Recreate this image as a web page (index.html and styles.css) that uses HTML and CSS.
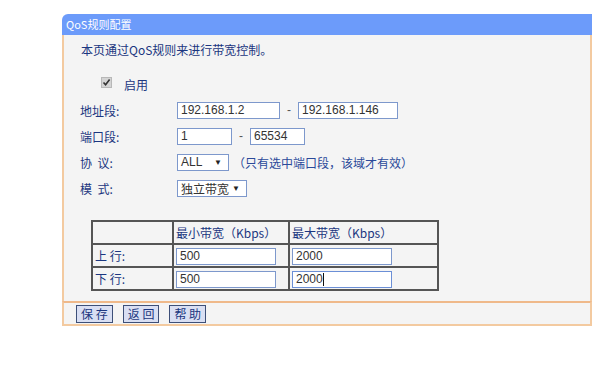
FILE: index.html
```html
<!DOCTYPE html>
<html lang="zh">
<head>
<meta charset="utf-8">
<title>QoS规则配置</title>
<link rel="stylesheet" href="styles.css">
</head>
<body>
<div class="panel">
  <div class="head">QoS规则配置</div>
  <div class="body">
    <div class="intro">本页通过QoS规则来进行带宽控制。</div>
    <div class="check-row">
      <span class="cbox"><svg width="9" height="9" viewBox="0 0 9 9"><path d="M1.5 4.5 L3.6 6.8 L7.6 1.6" fill="none" stroke="#333" stroke-width="1.6"/></svg></span>
      <span class="check-label">启用</span>
    </div>
    <div class="row">
      <span class="label">地址段:</span>
      <span class="field w103">192.168.1.2</span>
      <span class="dash">-</span>
      <span class="field w100">192.168.1.146</span>
    </div>
    <div class="row">
      <span class="label">端口段:</span>
      <span class="field w55">1</span>
      <span class="dash">-</span>
      <span class="field w55">65534</span>
    </div>
    <div class="row">
      <span class="label">协&nbsp;&nbsp;议:</span>
      <span class="select w52"><span>ALL</span><span class="arrow">▼</span></span>
      <span class="note">（只有选中端口段，该域才有效）</span>
    </div>
    <div class="row">
      <span class="label">模&nbsp;&nbsp;式:</span>
      <span class="select w70"><span>独立带宽</span><span class="arrow">▼</span></span>
    </div>
    <table class="bw">
      <tr>
        <td class="c1"></td>
        <td class="c2">最小带宽（Kbps）</td>
        <td class="c3">最大带宽（Kbps）</td>
      </tr>
      <tr>
        <td class="c1">上&nbsp;行:</td>
        <td class="c2"><span class="field w100">500</span></td>
        <td class="c3"><span class="field w100">2000</span></td>
      </tr>
      <tr>
        <td class="c1">下&nbsp;行:</td>
        <td class="c2"><span class="field w100">500</span></td>
        <td class="c3"><span class="field w100 active">2000<span class="caret"></span></span></td>
      </tr>
    </table>
  </div>
  <div class="foot">
    <span class="btn">保&nbsp;存</span>
    <span class="btn">返&nbsp;回</span>
    <span class="btn">帮&nbsp;助</span>
  </div>
</div>
</body>
</html>
```

FILE: styles.css
```css
html, body {
  margin: 0;
  padding: 0;
  background: #ffffff;
}
body {
  font-family: "Noto Sans CJK SC", "Liberation Sans", sans-serif;
  font-size: 12px;
  color: #1b3680;
}
.panel {
  margin: 14px 0 0 62px;
  width: 530px;
}
.head {
  height: 21px;
  line-height: 21px;
  background: #6c9bfa;
  color: #ffffff;
  padding-left: 4px;
  border-radius: 6px 0 0 0;
  font-size: 11px;
}
.body {
  background: #f4f4f4;
  border-left: 2px solid #f3caa0;
  border-right: 2px solid #f3caa0;
  padding: 7px 0 10px 16px;
}
.intro {
  height: 16px;
  line-height: 16px;
  padding-left: 1px;
}
.check-row {
  margin-top: 17px;
  height: 18px;
  display: flex;
  align-items: center;
  padding-left: 21px;
}
.cbox {
  width: 9px;
  height: 9px;
  background: #d4d4d4;
  border: 1px solid #b8b8b8;
  display: inline-flex;
  align-items: center;
  justify-content: center;
  margin-top: -4px;
}
.check-label {
  margin-left: 12px;
}
.row {
  height: 26px;
  display: flex;
  align-items: center;
}
.check-row + .row {
  margin-top: 4px;
}
.label {
  width: 97px;
  flex: none;
}
.field {
  display: inline-block;
  box-sizing: border-box;
  height: 17px;
  line-height: 15px;
  border: 1px solid #7d98cc;
  background: #ffffff;
  color: #333333;
  font-family: "Liberation Sans", sans-serif;
  font-size: 12px;
  padding-left: 3px;
  white-space: nowrap;
}
.w103 { width: 103px; }
.w100 { width: 100px; }
.w55 { width: 55px; }
.w52 { width: 52px; }
.w70 { width: 70px; }
.dash {
  color: #555;
  font-family: "Liberation Sans", sans-serif;
  width: 18px;
  text-align: center;
}
.select {
  display: inline-flex;
  align-items: center;
  justify-content: space-between;
  box-sizing: border-box;
  height: 17px;
  border: 1px solid #7d98cc;
  background: #ffffff;
  color: #333333;
  font-family: "Liberation Sans", "Noto Sans CJK SC", sans-serif;
  font-size: 12px;
  padding: 0 6px 0 3px;
}
.arrow {
  font-size: 8px;
  color: #222;
}
.note {
  margin-left: 4px;
  color: #2b4a9a;
}
.bw {
  margin: 19px 0 0 11px;
  border-collapse: collapse;
  border: 2px solid #555555;
}
.bw td {
  border: 2px solid #555555;
  height: 21px;
  padding: 0 0 0 2px;
  vertical-align: middle;
}
.bw .c1 { width: 77px; }
.bw .c2 { width: 112px; }
.bw .c3 { width: 145px; }
.bw .field { height: 17px; }
.active {
  border-color: #6b8fd6;
}
.caret {
  display: inline-block;
  width: 1px;
  height: 13px;
  background: #111;
  vertical-align: middle;
}
.foot {
  background: #f4f4f4;
  border: 2px solid #f3caa0;
  border-top: 2px solid #efb98a;
  height: 21px;
  padding-left: 12px;
  display: flex;
  align-items: center;
  gap: 10px;
}
.btn {
  display: inline-block;
  height: 16px;
  line-height: 16px;
  padding: 0 4px;
  background: #d9dff3;
  border: 1px solid #3d4f78;
  color: #1b3680;
  font-size: 12px;
}
```
